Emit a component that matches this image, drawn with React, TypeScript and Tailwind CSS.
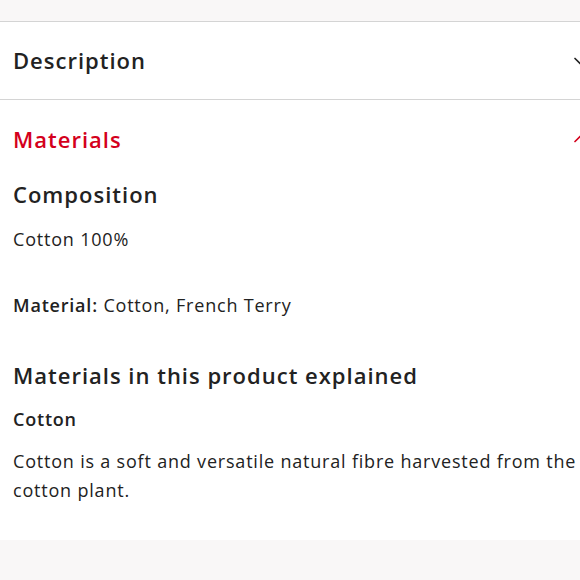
import { ChevronDown, ChevronUp } from "lucide-react";

export default function App() {
  return (
    <div className="h-[580px] w-[580px] overflow-hidden bg-[#f9f7f7] font-['Open_Sans',sans-serif] text-[#222]">
      <div className="h-[21px]" />
      <div className="border-t border-[#d4d4d4] bg-white">
        <button className="flex h-[77px] w-full items-center justify-between pl-[13px] text-left">
          <span className="text-[22px] font-semibold tracking-[1px]">Description</span>
          <ChevronDown className="relative left-[10px] h-5 w-5 shrink-0 text-[#222]" strokeWidth={2} />
        </button>
        <div className="border-t border-[#d4d4d4]">
          <button className="flex h-[78px] w-full items-center justify-between pl-[13px] text-left">
            <span className="text-[22px] font-semibold tracking-[1px] text-[#d4001c]">Materials</span>
            <ChevronUp className="relative left-[10px] h-5 w-5 shrink-0 text-[#d4001c]" strokeWidth={2} />
          </button>
          <div className="pb-[35px] pl-[13px] text-[18px] tracking-[0.8px]">
            <h3 className="text-[22px] font-semibold leading-[32px] tracking-[1px]">Composition</h3>
            <p className="mt-[17px] leading-[24px]">Cotton 100%</p>
            <p className="mt-[42px] leading-[24px]">
              <span className="font-semibold">Material:</span> Cotton, French Terry
            </p>
            <h3 className="mt-[41px] text-[22px] font-semibold leading-[34px] tracking-[1px]">
              Materials in this product explained
            </h3>
            <h4 className="mt-[15px] font-semibold leading-[24px]">Cotton</h4>
            <p className="mt-[16px] leading-[29px]">
              Cotton is a soft and versatile natural fibre harvested from the cotton plant.
            </p>
          </div>
        </div>
      </div>
    </div>
  );
}
